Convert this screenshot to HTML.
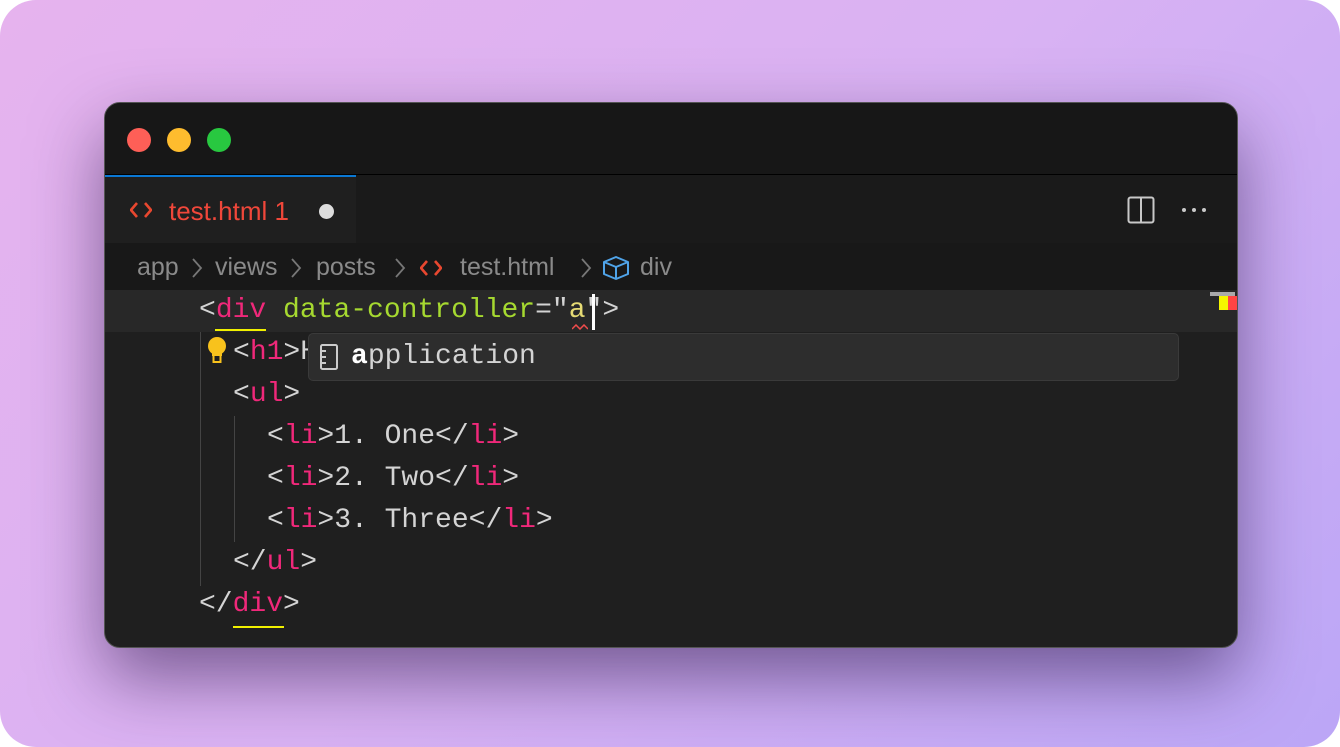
<!DOCTYPE html>
<html><head><meta charset="utf-8"><style>
html,body{margin:0;padding:0;}
body{width:1340px;height:747px;background:#fff;position:relative;overflow:hidden;font-family:"Liberation Sans",sans-serif;}
.bg{position:absolute;left:0;top:0;width:1340px;height:747px;border-radius:36px;background:linear-gradient(135deg,#e6b3ee 0%,#d9b2f3 50%,#bba6f6 100%);}
.win{position:absolute;left:104px;top:102px;width:1134px;height:546px;border-radius:16px;background:#1f1f1f;border:1px solid #555;box-sizing:border-box;overflow:hidden;box-shadow:0 30px 70px rgba(40,20,70,.55);}
.title{position:absolute;left:0;top:0;right:0;height:71px;background:#171717;border-bottom:1px solid #000;}
.dot{position:absolute;top:25px;width:24px;height:24px;border-radius:50%;}
.tabbar{position:absolute;left:0;top:72px;right:0;height:68px;background:#1a1a1a;}
.tab{position:absolute;left:0;top:0;width:251px;height:68px;background:#1f1f1f;border-top:2px solid #0a78d4;box-sizing:border-box;}
.crumb{position:absolute;left:0;top:140px;right:0;height:47px;background:#181818;color:#8a8a8a;font-size:25px;}
.crumb span{position:absolute;top:10px;white-space:pre;}
.crumb svg.ch{position:absolute;top:14px;}
.code{position:absolute;left:0;top:187px;right:0;bottom:0;}
.ln{position:absolute;left:94px;font-family:"Liberation Mono",monospace;font-size:28px;color:#d4d4d4;white-space:pre;line-height:42px;height:42px;}
.t{color:#f0287a}.a{color:#a6d930}.s{color:#e6db74}
.guide{position:absolute;width:1px;background:#444;}
</style></head><body>
<div class="bg"></div>
<div class="win">
 <div class="title">
  <div class="dot" style="left:22px;background:#fe5f57"></div>
  <div class="dot" style="left:62px;background:#febc2e"></div>
  <div class="dot" style="left:102px;background:#28c840"></div>
 </div>
 <div class="tabbar">
  <div class="tab">
   <svg style="position:absolute;left:25px;top:24px" width="22" height="18" viewBox="0 0 22 18"><path d="M7 2 L1 9 L7 16 M15 2 L21 9 L15 16" fill="none" stroke="#e8472f" stroke-width="2.6"/></svg>
   <span style="position:absolute;left:64px;top:19px;color:#f0473a;font-size:26px;">test.html 1</span>
   <span style="position:absolute;left:214px;top:27px;width:15px;height:15px;border-radius:50%;background:#ddd;"></span>
  </div>
  <svg style="position:absolute;left:1022px;top:21px" width="28" height="28" viewBox="0 0 28 28"><rect x="1.5" y="1.5" width="25" height="25" rx="2" fill="none" stroke="#c8c8c8" stroke-width="2"/><line x1="14" y1="2" x2="14" y2="26" stroke="#c8c8c8" stroke-width="2"/></svg>
  <svg style="position:absolute;left:1076px;top:32px" width="28" height="6"><circle cx="3" cy="3" r="2" fill="#c8c8c8"/><circle cx="13" cy="3" r="2" fill="#c8c8c8"/><circle cx="23" cy="3" r="2" fill="#c8c8c8"/></svg>
 </div>
 <div class="crumb">
  <span style="left:32px">app</span>
  <svg class="ch" style="left:86px" width="12" height="22"><path d="M2 2 L10 11 L2 20" fill="none" stroke="#777" stroke-width="1.8"/></svg>
  <span style="left:110px">views</span>
  <svg class="ch" style="left:185px" width="12" height="22"><path d="M2 2 L10 11 L2 20" fill="none" stroke="#777" stroke-width="1.8"/></svg>
  <span style="left:211px">posts</span>
  <svg class="ch" style="left:289px" width="12" height="22"><path d="M2 2 L10 11 L2 20" fill="none" stroke="#777" stroke-width="1.8"/></svg>
  <svg style="position:absolute;left:315px;top:16px" width="22" height="18" viewBox="0 0 22 18"><path d="M7 2 L1 9 L7 16 M15 2 L21 9 L15 16" fill="none" stroke="#e8472f" stroke-width="2.6"/></svg>
  <span style="left:355px">test.html</span>
  <svg class="ch" style="left:475px" width="12" height="22"><path d="M2 2 L10 11 L2 20" fill="none" stroke="#777" stroke-width="1.8"/></svg>
  <svg style="position:absolute;left:497px;top:12px" width="28" height="26" viewBox="0 0 28 26"><path d="M14 2 L26 7 L26 19 L14 24 L2 19 L2 7 Z M2 7 L14 12 L26 7 M14 12 L14 24" fill="none" stroke="#4fa3e8" stroke-width="2" stroke-linejoin="round"/></svg>
  <span style="left:535px">div</span>
 </div>
 <div class="code">
  <div style="position:absolute;left:0;top:0;right:0;height:42px;background:#282828;"></div>
  <div class="guide" style="left:95px;top:42px;height:254px;"></div>
  <div class="guide" style="left:129px;top:126px;height:126px;"></div>
  <div class="ln" style="top:0">&lt;<span class="t">div</span> <span class="a">data-controller</span>="<span class="s">a</span>"&gt;</div>
  <div style="position:absolute;left:487px;top:4px;width:3px;height:36px;background:#fff;"></div>
  <div style="position:absolute;left:110px;top:39px;width:51px;height:2px;background:#f0f000;"></div>
  <svg style="position:absolute;left:467px;top:34px" width="16" height="6"><path d="M0 5 L4 1 L8 5 L12 1 L16 5" stroke="#f14c4c" stroke-width="1.5" fill="none"/></svg>
  <div class="ln" style="top:42px;left:128px">&lt;<span class="t">h1</span>&gt;H</div>
  <svg style="position:absolute;left:101px;top:46px" width="22" height="28" viewBox="0 0 22 28"><circle cx="11" cy="10" r="9" fill="#f8c21c"/><rect x="6" y="14" width="10" height="6" fill="#f8c21c"/><rect x="7.5" y="19" width="7" height="7" fill="none" stroke="#f8c21c" stroke-width="2"/></svg>
  <div class="ln" style="top:84px;left:128px">&lt;<span class="t">ul</span>&gt;</div>
  <div class="ln" style="top:126px;left:162px">&lt;<span class="t">li</span>&gt;1. One&lt;/<span class="t">li</span>&gt;</div>
  <div class="ln" style="top:168px;left:162px">&lt;<span class="t">li</span>&gt;2. Two&lt;/<span class="t">li</span>&gt;</div>
  <div class="ln" style="top:210px;left:162px">&lt;<span class="t">li</span>&gt;3. Three&lt;/<span class="t">li</span>&gt;</div>
  <div class="ln" style="top:252px;left:128px">&lt;/<span class="t">ul</span>&gt;</div>
  <div class="ln" style="top:294px;left:94px">&lt;/<span class="t">div</span>&gt;</div>
  <div style="position:absolute;left:128px;top:336px;width:51px;height:2px;background:#f0f000;"></div>
  <div style="position:absolute;left:203px;top:43px;width:871px;height:48px;background:#2d2d2d;border:1px solid #3a3a3a;border-radius:5px;box-sizing:border-box;">
   <svg style="position:absolute;left:10px;top:9px" width="20" height="28" viewBox="0 0 20 28"><rect x="2" y="2" width="16" height="24" rx="1.5" fill="none" stroke="#ccc" stroke-width="2"/><line x1="2" y1="8" x2="7" y2="8" stroke="#ccc" stroke-width="2"/><line x1="2" y1="14" x2="7" y2="14" stroke="#ccc" stroke-width="2"/><line x1="2" y1="20" x2="7" y2="20" stroke="#ccc" stroke-width="2"/></svg>
   <span style="position:absolute;left:42px;top:2px;font-family:'Liberation Mono',monospace;font-size:28px;color:#d4d4d4;line-height:42px;"><b style="color:#fff">a</b>pplication</span>
  </div>
  <div style="position:absolute;left:1105px;top:2px;width:25px;height:4px;background:#aaa;"></div>
  <div style="position:absolute;left:1114px;top:6px;width:9px;height:14px;background:#f5f500;"></div>
  <div style="position:absolute;left:1123px;top:6px;width:9px;height:14px;background:#f44;"></div>
 </div>
</div>
</body></html>
